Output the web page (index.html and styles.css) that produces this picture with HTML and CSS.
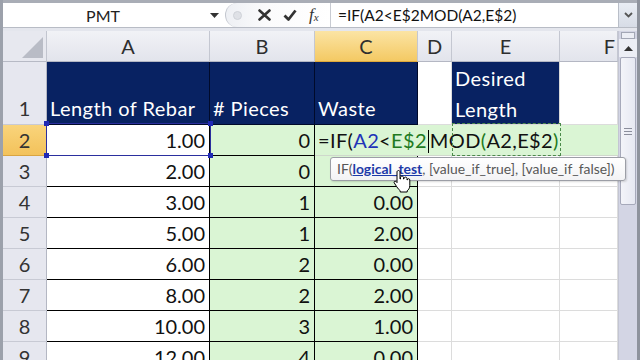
FILE: index.html
```html
<!DOCTYPE html>
<html lang="en">
<head>
  <meta charset="UTF-8" />
  <title>Rebar Waste</title>
  <link rel="stylesheet" href="styles.css">
</head>
<body>
  <div class="app">

    <div class="formula-bar">
      <div class="name-box">
        <span class="name">PMT</span>
        <span class="name-dd">
          <svg width="9" height="5" viewBox="0 0 9 5"><path d="M0 0h9L4.5 5z" fill="#333"/></svg>
        </span>
      </div>
      <div class="fx-buttons">
        <span class="grip"></span>
        <svg class="btn-x" width="13" height="12" viewBox="0 0 13 12"><path d="M1.5 1.5l10 9M11.5 1.5l-10 9" stroke="#333" stroke-width="2.6" stroke-linecap="round"/></svg>
        <svg class="btn-ok" width="14" height="12" viewBox="0 0 14 12"><path d="M1.5 6.5l4 4L12.5 1.5" fill="none" stroke="#333" stroke-width="2.8" stroke-linejoin="round"/></svg>
        <span class="fx">f<sub>x</sub></span>
      </div>
      <div class="formula-input">=IF(A2&lt;E$2MOD(A2,E$2)</div>
      <div class="expand">
        <svg width="9" height="6" viewBox="0 0 9 6"><path d="M1 1l3.5 3.5L8 1" fill="none" stroke="#555" stroke-width="1.8"/></svg>
      </div>
    </div>

    <div class="sheet-wrap">
      <div class="sheet">
        <div class="corner"><span class="tri"></span></div>
        <div class="ch">A</div>
        <div class="ch">B</div>
        <div class="ch sel">C</div>
        <div class="ch">D</div>
        <div class="ch">E</div>
        <div class="ch ch-f">F</div>

        <div class="rh rh-tall">1</div>
        <div class="cell hd">Length of Rebar</div>
        <div class="cell hd">#&nbsp;Pieces</div>
        <div class="cell hd hd-last">Waste</div>
        <div class="cell empty"></div>
        <div class="cell hd hd-e">Desired<br>Length</div>
        <div class="cell empty"></div>

        <div class="rh sel">2</div>
        <div class="cell num">1.00</div>
        <div class="cell num grn">0</div>
        <div class="cell edit">=IF(<span class="ref1">A2</span>&lt;<span class="ref2">E$2</span><span class="caret"></span>MOD<span class="ref2">(</span>A2,E$2<span class="ref2">)</span></div>

        <div class="rh">3</div>
        <div class="cell num">2.00</div>
        <div class="cell num grn">0</div>
        <div class="cell num grn lastcol">2.00</div>
        <div class="cell empty"></div>
        <div class="cell empty"></div>
        <div class="cell empty"></div>

        <div class="rh">4</div>
        <div class="cell num">3.00</div>
        <div class="cell num grn">1</div>
        <div class="cell num grn lastcol">0.00</div>
        <div class="cell empty"></div>
        <div class="cell empty"></div>
        <div class="cell empty"></div>

        <div class="rh">5</div>
        <div class="cell num">5.00</div>
        <div class="cell num grn">1</div>
        <div class="cell num grn lastcol">2.00</div>
        <div class="cell empty"></div>
        <div class="cell empty"></div>
        <div class="cell empty"></div>

        <div class="rh">6</div>
        <div class="cell num">6.00</div>
        <div class="cell num grn">2</div>
        <div class="cell num grn lastcol">0.00</div>
        <div class="cell empty"></div>
        <div class="cell empty"></div>
        <div class="cell empty"></div>

        <div class="rh">7</div>
        <div class="cell num">8.00</div>
        <div class="cell num grn">2</div>
        <div class="cell num grn lastcol">2.00</div>
        <div class="cell empty"></div>
        <div class="cell empty"></div>
        <div class="cell empty"></div>

        <div class="rh">8</div>
        <div class="cell num">10.00</div>
        <div class="cell num grn">3</div>
        <div class="cell num grn lastcol">1.00</div>
        <div class="cell empty"></div>
        <div class="cell empty"></div>
        <div class="cell empty"></div>

        <div class="rh">9</div>
        <div class="cell num">12.00</div>
        <div class="cell num grn">4</div>
        <div class="cell num grn lastcol">0.00</div>
        <div class="cell empty"></div>
        <div class="cell empty"></div>
        <div class="cell empty"></div>

        <!-- reference highlights while editing C2 -->
        <div class="hl-a2">
          <span class="h tl"></span><span class="h tr"></span>
          <span class="h bl"></span><span class="h br"></span>
        </div>
        <div class="hl-e2"></div>
      </div>

      <div class="vscroll">
        <div class="split"></div>
        <div class="up"><svg width="9" height="5" viewBox="0 0 9 5"><path d="M0 5h9L4.5 0z" fill="#333"/></svg></div>
        <div class="thumb"><span class="grip-lines"></span></div>
      </div>
    </div>

    <div class="tooltip">IF(<a class="arg">logical_test</a>, [value_if_true], [value_if_false])</div>

    <svg class="hand" width="18" height="24" viewBox="0 0 18 24">
      <path d="M5.5 1.5c.8 0 1.5.7 1.5 1.5v7h.5V8.5c0-.8.7-1.4 1.5-1.4s1.5.6 1.5 1.4V10h.5V9.5c0-.8.7-1.4 1.5-1.4s1.5.6 1.5 1.4V11h.3c0-.8.6-1.3 1.3-1.3s1.2.5 1.2 1.3v5.5c0 2.5-1.2 4.2-2.6 5.3V23H7.2v-1.3C5.8 20.6 4.6 19.3 3.6 17.5L1.2 13.8c-.6-1 .6-2.1 1.6-1.4L4 13.6V3c0-.8.7-1.5 1.5-1.5z" fill="#fff" stroke="#000" stroke-width="1"/>
    </svg>

  </div>
</body>
</html>
```

FILE: styles.css
```css
* {
  box-sizing: border-box;
  margin: 0;
  padding: 0;
}

body {
  width: 640px;
  height: 360px;
  overflow: hidden;
  font-family: Lato, "Liberation Sans", sans-serif;
  background: #fff;
  color: #111;
}

.app {
  position: relative;
  width: 640px;
  height: 360px;
  overflow: hidden;
  background: #e4e6ed;
  border-left: 3px solid #9ca1ab;
  border-right: 3px solid #8e939d;
}

/* ---------- formula bar ---------- */

.formula-bar {
  display: flex;
  height: 28px;
  margin-bottom: 3px;
  background: #fff;
  border-top: 3px solid #a9adb6;
  border-bottom: 1px solid #b8bcc5;
}

.name-box {
  display: flex;
  align-items: center;
  width: 222px;
}

.name {
  width: 200px;
  text-align: center;
  font-size: 16px;
  color: #222;
}

.name-dd {
  display: flex;
  justify-content: center;
  width: 22px;
}

.fx-buttons {
  display: flex;
  align-items: center;
  gap: 12px;
  width: 105px;
  padding-left: 7px;
  border-left: 1px solid #c3c7cf;
  border-radius: 13px 0 0 13px;
  background: linear-gradient(to right, #eef0f4, #fbfbfc 40%, #fff);
}

.grip {
  width: 9px;
  height: 9px;
  border-radius: 50%;
  background: #dfe1e6;
  border: 1px solid #cfd2d8;
  margin-right: 4px;
}

.fx {
  font-family: "Liberation Serif", serif;
  font-style: italic;
  font-size: 17px;
  color: #333;
}

.fx sub {
  font-size: 11px;
  vertical-align: -1px;
}

.formula-input {
  flex: 1;
  padding-left: 7px;
  border-left: 1px solid #c8cbd2;
  font-size: 15.5px;
  line-height: 24px;
  color: #111;
}

.expand {
  display: flex;
  align-items: center;
  justify-content: center;
  width: 19px;
  background: linear-gradient(#e9edf4, #d7dce6);
  border-left: 1px solid #b9bec8;
}

/* ---------- sheet ---------- */

.sheet-wrap {
  display: flex;
  height: 329px;
}

.sheet {
  position: relative;
  display: grid;
  grid-template-columns: 44px 163px 105px 103px 34px 108px 58px;
  grid-template-rows: 31px 63px repeat(8, 31px);
  width: 615px;
  background: #fff;
  font-size: 20px;
}

.corner {
  position: relative;
  background: #e7e8ef;
  border-right: 1px solid #c2c5cf;
  border-bottom: 1px solid #b7bac5;
}

.tri {
  position: absolute;
  right: 3px;
  bottom: 3px;
  width: 0;
  height: 0;
  border-left: 21px solid transparent;
  border-bottom: 21px solid #b9bcc6;
}

.ch {
  text-align: center;
  line-height: 30px;
  color: #2e2e2e;
  background: linear-gradient(#f1f2f6, #e2e4ec);
  border-right: 1px solid #c4c7d1;
  border-bottom: 1px solid #b4b7c3;
}

.ch.sel {
  background: linear-gradient(#fbe4a4, #f4c963);
  border-bottom-color: #e0a93a;
}

.ch-f {
  text-align: right;
  padding-right: 2px;
}

.rh {
  text-align: center;
  line-height: 30px;
  color: #333;
  background: #e6e7ef;
  border-right: 1px solid #b4b7c3;
  border-bottom: 1px solid #c8cad4;
}

.rh-tall {
  display: flex;
  align-items: flex-end;
  justify-content: center;
  padding-bottom: 1px;
}

.rh.sel {
  background: linear-gradient(#f9d47b, #f3c25b);
  border-bottom-color: #d9a441;
}

.cell {
  padding: 0 4px;
  line-height: 30px;
  white-space: nowrap;
  border-right: 1px solid #000;
  border-bottom: 1px solid #000;
}

.hd {
  display: flex;
  align-items: flex-end;
  padding-left: 3px;
  background: #082262;
  color: #fff;
  line-height: 31px;
  letter-spacing: 0.45px;
  border-right-color: #000a2a;
  border-bottom-color: #000a2a;
}

.hd-e {
  display: block;
  padding-top: 1px;
  border-right-color: #d9d9d9;
  border-bottom-color: #d9d9d9;
}

.num {
  text-align: right;
}

.grn {
  background: #daf5d4;
}

.empty {
  border-right-color: #dcdcdc;
  border-bottom-color: #dcdcdc;
}

.edit {
  grid-column: 4 / 8;
  padding-left: 3px;
  letter-spacing: 0.35px;
  background: #daf5d4;
  border-right: none;
  border-bottom-color: #cfd8cc;
}

.ref1 {
  color: #2133b8;
}

.ref2 {
  color: #217a21;
}

.caret {
  display: inline-block;
  width: 1px;
  height: 23px;
  margin: 0 1px;
  background: #000;
  vertical-align: -5px;
}

.hl-a2 {
  position: absolute;
  left: 43px;
  top: 92px;
  width: 165px;
  height: 33px;
  border: 1px solid #2b2f9e;
}

.h {
  position: absolute;
  width: 5px;
  height: 5px;
  background: #2029b5;
}

.tl { left: -3px; top: -3px; }
.tr { right: -3px; top: -3px; }
.bl { left: -3px; bottom: -3px; }
.br { right: -3px; bottom: -3px; }

.hl-e2 {
  position: absolute;
  left: 449px;
  top: 92px;
  width: 109px;
  height: 33px;
  border: 1px dashed #4a8a4a;
}

/* ---------- scrollbar ---------- */

.vscroll {
  display: flex;
  flex-direction: column;
  width: 19px;
  background: #d3d5e4;
  border-left: 1px solid #c3c5d3;
}

.split {
  height: 7px;
  margin: 1px 2px 0;
  background: #eceef5;
  border: 1px solid #a3a7b5;
}

.up {
  display: flex;
  align-items: center;
  justify-content: center;
  height: 18px;
  background: #eceef5;
}

.thumb {
  display: flex;
  align-items: center;
  justify-content: center;
  height: 148px;
  margin: 0 1px;
  background: linear-gradient(to right, #f3f4f9, #e6e8f2);
  border: 1px solid #a6a9ba;
  border-radius: 2px;
}

.grip-lines {
  width: 8px;
  height: 7px;
  border-top: 1px solid #8b8e9c;
  border-bottom: 1px solid #8b8e9c;
  background: linear-gradient(#8b8e9c, #8b8e9c) center / 8px 1px no-repeat;
}

/* ---------- overlays ---------- */

.tooltip {
  position: absolute;
  left: 327px;
  top: 157px;
  width: 296px;
  height: 24px;
  padding-left: 6px;
  font-size: 13.9px;
  line-height: 22px;
  color: #575757;
  white-space: nowrap;
  background: linear-gradient(#fff, #f3f3f5);
  border: 1px solid #9c9ea6;
  border-radius: 3px;
  box-shadow: 1px 1px 2px rgba(0, 0, 0, 0.15);
}

.arg {
  font-weight: bold;
  color: #1d3aa8;
  text-decoration: underline;
}

.hand {
  position: absolute;
  left: 390px;
  top: 169px;
}
```
